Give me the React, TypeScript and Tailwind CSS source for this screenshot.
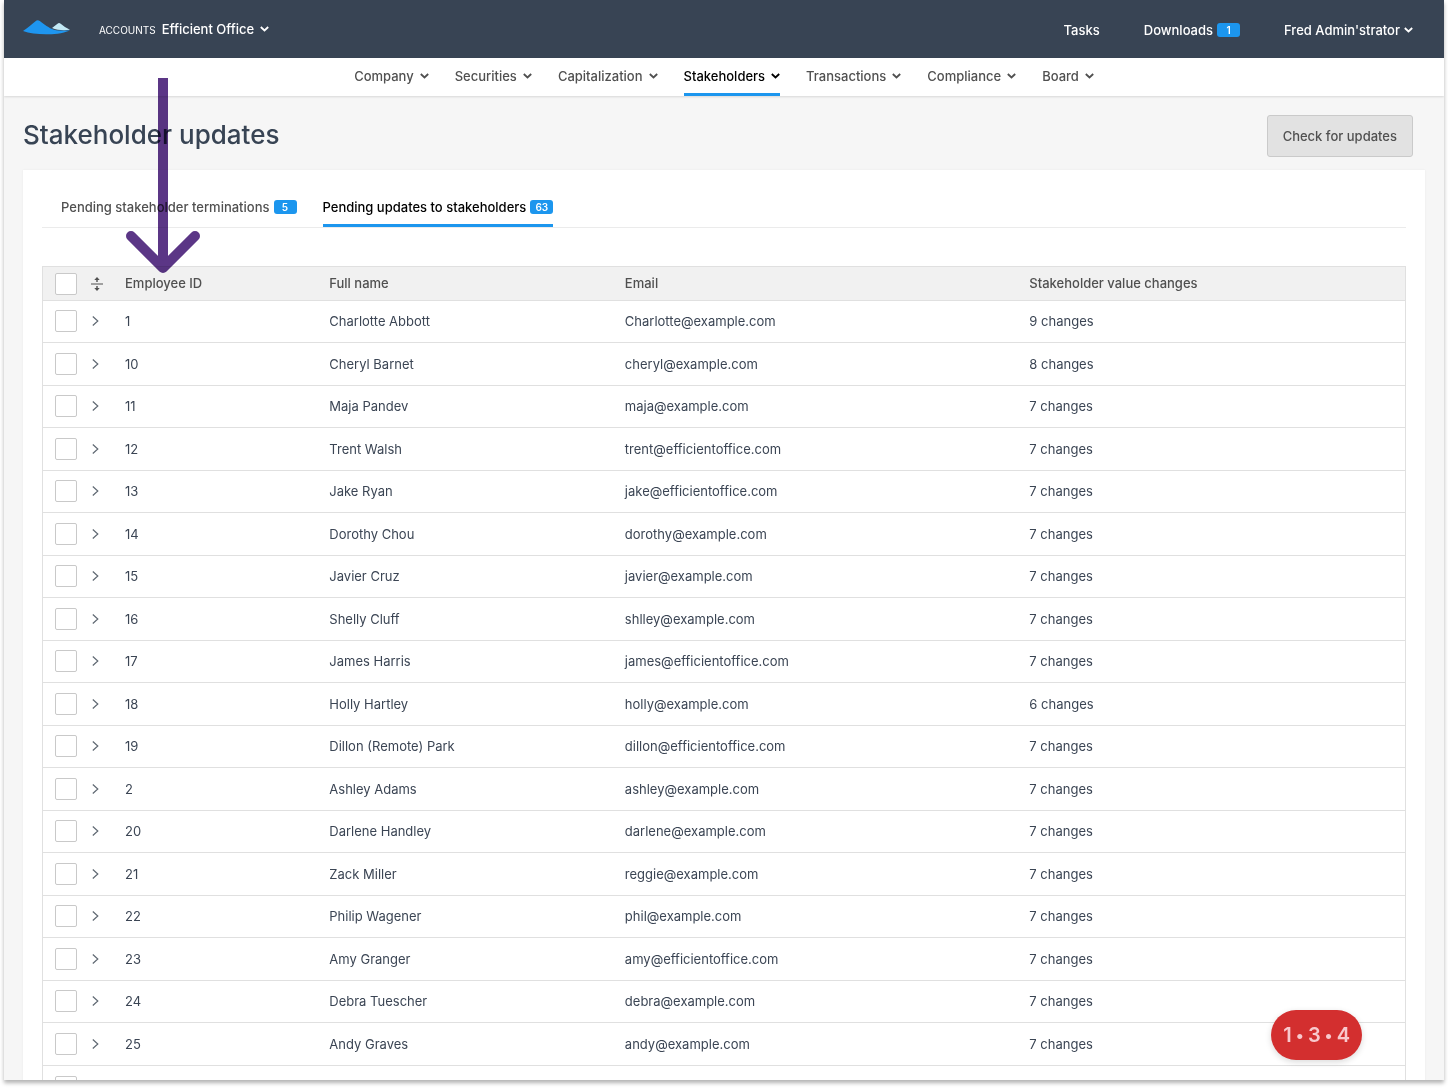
import React from "react";

type Person = { id: string; name: string; email: string; changes: number };

const people: Person[] = [
  { id: "1", name: "Charlotte Abbott", email: "Charlotte@example.com", changes: 9 },
  { id: "10", name: "Cheryl Barnet", email: "cheryl@example.com", changes: 8 },
  { id: "11", name: "Maja Pandev", email: "maja@example.com", changes: 7 },
  { id: "12", name: "Trent Walsh", email: "trent@efficientoffice.com", changes: 7 },
  { id: "13", name: "Jake Ryan", email: "jake@efficientoffice.com", changes: 7 },
  { id: "14", name: "Dorothy Chou", email: "dorothy@example.com", changes: 7 },
  { id: "15", name: "Javier Cruz", email: "javier@example.com", changes: 7 },
  { id: "16", name: "Shelly Cluff", email: "shlley@example.com", changes: 7 },
  { id: "17", name: "James Harris", email: "james@efficientoffice.com", changes: 7 },
  { id: "18", name: "Holly Hartley", email: "holly@example.com", changes: 6 },
  { id: "19", name: "Dillon (Remote) Park", email: "dillon@efficientoffice.com", changes: 7 },
  { id: "2", name: "Ashley Adams", email: "ashley@example.com", changes: 7 },
  { id: "20", name: "Darlene Handley", email: "darlene@example.com", changes: 7 },
  { id: "21", name: "Zack Miller", email: "reggie@example.com", changes: 7 },
  { id: "22", name: "Philip Wagener", email: "phil@example.com", changes: 7 },
  { id: "23", name: "Amy Granger", email: "amy@efficientoffice.com", changes: 7 },
  { id: "24", name: "Debra Tuescher", email: "debra@example.com", changes: 7 },
  { id: "25", name: "Andy Graves", email: "andy@example.com", changes: 7 },
];

const menus = ["Company", "Securities", "Capitalization", "Stakeholders", "Transactions", "Compliance", "Board"];

function Caret() {
  return (
    <svg width="9" height="6" viewBox="0 0 9 6" fill="none" stroke="currentColor" strokeWidth="1.8" aria-hidden="true">
      <path d="M0.800 1 L4.500 4.500 L8.200 1" />
    </svg>
  );
}

function Logo() {
  return (
    <svg width="48" height="15" viewBox="0 0 48 15" aria-hidden="true">
      <path
        d="M0 11 C5 8 9 4 12.500 1.300 Q14.500 -0.500 16.800 1.100 C21 4 26 8.500 31 9.700 C36 11 42 10.600 47 10.400 C39 13.600 30 14.300 23 14.300 C14 14.300 6 13.300 0 11 Z"
        fill="#1e96f0"
      />
      <path d="M29 8 L34.500 3.700 Q36 2.500 37.700 3.700 Q42 7.500 47 9.800 C41 10.700 34 10.300 29 8 Z" fill="#c3e9f5" />
    </svg>
  );
}

function Badge({ children }: { children: React.ReactNode }) {
  return (
    <span className="flex h-3.5 min-w-[23px] items-center justify-center rounded-[3px] bg-[#1c96ee] px-[5px] text-[10px] leading-none font-semibold text-white">
      {children}
    </span>
  );
}

function Tick({ label }: { label: string }) {
  return (
    <input
      type="checkbox"
      aria-label={label}
      className="block size-[22px] appearance-none rounded-[2px] border border-[#c9c9c9] bg-white checked:bg-[#1c96ee]"
    />
  );
}

function SortIcon() {
  return (
    <svg width="12" height="14" viewBox="0 0 12 14" fill="#505050" aria-hidden="true">
      <path d="M0 6.400h12v1.200H0z M6 0l2.700 3H6.700v2H5.300V3H3.300z M6 14l2.700-3H6.700V9H5.300v2H3.300z" />
    </svg>
  );
}

function Expand() {
  return (
    <svg width="7" height="10" viewBox="0 0 7 10" fill="none" stroke="#5f6872" strokeWidth="1.200" aria-hidden="true">
      <path d="M0.800 0.500 L5.800 5 L0.800 9.500" />
    </svg>
  );
}

export default function App() {
  return (
    <div className="relative h-screen overflow-hidden bg-white px-1 pb-2 font-['Inter',sans-serif] text-[13px] leading-5 text-[#505050]">
      <div className="h-full shadow-[0_3px_4px_rgba(0,0,0,0.3)]">
        <div className="h-full overflow-hidden bg-[#f6f6f6]">
          <header className="flex h-[58px] items-center justify-between bg-[#384454] pr-[31px] pl-[19px] text-white">
            <div className="flex items-center">
              <a href="#home" aria-label="Home" className="mr-7 -mt-1">
                <Logo />
              </a>
              <button type="button" className="flex items-center gap-1.5 font-medium">
                <span className="pt-px text-[10px] font-normal">ACCOUNTS</span>
                Efficient Office
                <Caret />
              </button>
            </div>
            <div className="flex items-center gap-11 pt-0.5 font-medium">
              <a href="#tasks">Tasks</a>
              <a href="#downloads" className="flex items-center gap-1">
                Downloads <Badge>1</Badge>
              </a>
              <button type="button" className="flex items-center gap-1 font-medium">
                Fred Admin'strator
                <Caret />
              </button>
            </div>
          </header>

          <nav className="flex h-[38px] justify-center gap-[26px] bg-white font-medium shadow-[0_1px_2px_rgba(0,0,0,0.12)]">
            {menus.map((m) => (
              <button
                key={m}
                type="button"
                className={
                  m === "Stakeholders"
                    ? "flex items-center gap-1.5 border-b-3 border-[#1c96ee] text-black"
                    : "flex items-center gap-1.5 border-b-3 border-transparent"
                }
              >
                {m}
                <Caret />
              </button>
            ))}
          </nav>

          <main className="px-[19px]">
            <div className="flex h-[74px] items-center justify-between pr-3">
              <h1 className="pt-1 text-[26px] leading-8 font-medium text-[#384454]">Stakeholder updates</h1>
              <button
                type="button"
                className="mt-1.5 h-[42px] rounded-[3px] border border-[#cacaca] bg-[#e2e2e2] px-[15px] font-medium"
              >
                Check for updates
              </button>
            </div>

            <section className="bg-white px-[19px] pt-4 shadow-[0_0_2px_rgba(0,0,0,0.06)]">
              <div className="flex h-[42px] gap-[26px] border-b border-[#ebebeb] pl-[19px] font-medium" role="tablist">
                <button
                  type="button"
                  role="tab"
                  aria-selected="false"
                  className="flex items-center gap-1 border-b-3 border-transparent pt-1"
                >
                  Pending stakeholder terminations
                  <Badge>5</Badge>
                </button>
                <button
                  type="button"
                  role="tab"
                  aria-selected="true"
                  className="flex items-center gap-1 border-b-3 border-[#1c96ee] pt-1 text-black"
                >
                  Pending updates to stakeholders
                  <Badge>63</Badge>
                </button>
              </div>

              <table className="mt-[38px] w-full table-fixed border-separate border-spacing-0 border-x border-t border-[#e0e0e0] text-left">
                <colgroup>
                  <col className="w-10" />
                  <col className="w-[34px]" />
                  <col className="w-[15%]" />
                  <col className="w-[21.7%]" />
                  <col className="w-[29.7%]" />
                  <col />
                </colgroup>
                <thead>
                  <tr className="h-[34px] bg-[#f1f1f1] *:border-b *:border-[#e0e0e0] *:font-medium">
                    <th className="pl-3">
                      <Tick label="Select all" />
                    </th>
                    <th className="pl-2">
                      <button type="button" aria-label="Expand all" className="block">
                        <SortIcon />
                      </button>
                    </th>
                    <th className="pb-0.5 pl-2">Employee ID</th>
                    <th className="pb-0.5 pl-2">Full name</th>
                    <th className="pb-0.5 pl-2">Email</th>
                    <th className="pb-0.5 pl-2">Stakeholder value changes</th>
                  </tr>
                </thead>
                <tbody className="text-[#3b4554]">
                  {people.map((p) => (
                    <tr key={p.id} className="*:border-b *:border-[#e0e0e0] odd:h-[42px] odd:*:pb-px even:h-[43px]">
                      <td className="pl-3">
                        <Tick label={"Select " + p.name} />
                      </td>
                      <td className="pl-[9px]">
                        <button type="button" aria-label={"Expand " + p.name} className="block">
                          <Expand />
                        </button>
                      </td>
                      <td className="pl-2">{p.id}</td>
                      <td className="pl-2">{p.name}</td>
                      <td className="pl-2">{p.email}</td>
                      <td className="pl-2">{p.changes} changes</td>
                    </tr>
                  ))}
                  <tr className="h-[42px]">
                    <td className="pb-px pl-3">
                      <Tick label="Select next row" />
                    </td>
                    <td colSpan={5} />
                  </tr>
                </tbody>
              </table>
            </section>
          </main>
        </div>
      </div>

      <svg
        className="pointer-events-none absolute top-[78px] left-[126px] mix-blend-multiply"
        width="74"
        height="196"
        viewBox="0 0 74 196"
        fill="none"
        stroke="#5b3686"
        strokeWidth="10"
        aria-hidden="true"
      >
        <path d="M37 0 V186" />
        <path d="M5 158 L37 190 L69 158" strokeLinecap="round" strokeLinejoin="round" />
      </svg>

      <button
        type="button"
        className="absolute right-[86px] bottom-7 flex h-[50px] items-center gap-1 rounded-full bg-[#d32f2f] px-3 text-xl font-semibold text-[#f8c9cd] shadow-[0_2px_6px_rgba(0,0,0,0.15)]"
      >
        <span>1</span>
        <span className="text-base leading-none">•</span>
        <span>3</span>
        <span className="text-base leading-none">•</span>
        <span>4</span>
      </button>
    </div>
  );
}
